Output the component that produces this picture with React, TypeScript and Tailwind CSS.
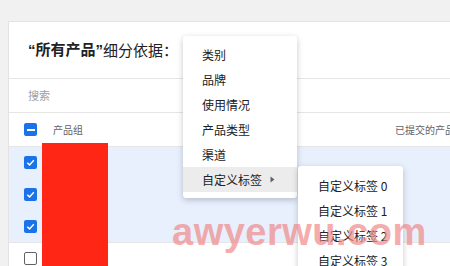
import React from "react";

const FONT = { fontFamily: '"Noto Sans CJK SC", "Noto Sans", sans-serif' };
const LATIN = { fontFamily: '"Liberation Sans", Arial, sans-serif' };

function Checkbox({ state }: { state: "checked" | "mixed" | "empty" }) {
  if (state === "empty") {
    return <div className="w-[13px] h-[13px] rounded-[2px] border-[1.5px] border-[#5f6368] bg-white" />;
  }
  return (
    <div className="w-[13px] h-[13px] rounded-[2px] bg-[#1a73e8] flex items-center justify-center">
      {state === "mixed" ? (
        <div className="w-[8px] h-[2px] bg-white" />
      ) : (
        <svg width="11" height="11" viewBox="0 0 12 12">
          <path d="M2.5 6.2 L5 8.6 L9.6 3.6" fill="none" stroke="white" strokeWidth="1.6" />
        </svg>
      )}
    </div>
  );
}

const menuItems = ["类别", "品牌", "使用情况", "产品类型", "渠道"];
const subItems = ["自定义标签 0", "自定义标签 1", "自定义标签 2", "自定义标签 3"];

export default function App() {
  return (
    <div className="relative w-[450px] h-[266px] overflow-hidden bg-[#f1f1f1]" style={FONT}>
      <div className="ml-[8px] mt-[21px] bg-white border-l border-t border-[#e3e3e3] h-[260px]">
        <div className="h-[57px] pl-[19px] flex items-center border-b border-[#e6e6e6] text-[15px] text-[#202124]">
          <span className="font-bold">
            <span style={LATIN}>“</span>所有产品<span style={LATIN}>”</span>
          </span>
          <span>细分依据：</span>
        </div>
        <div className="h-[34px] pl-[19px] flex items-center border-b border-[#e6e6e6] text-[11px] text-[#9aa0a6]">
          搜索
        </div>
        <div className="h-[34px] pl-[15px] flex items-center border-b border-[#e6e6e6] text-[10px] text-[#5f6368]">
          <Checkbox state="mixed" />
          <span className="ml-[16px]">产品组</span>
          <span className="ml-auto mr-[-5px] whitespace-nowrap">已提交的产品</span>
        </div>
        <div className="bg-[#e8f0fe]">
          {[0, 1, 2].map((i) => (
            <div key={i} className="h-[31.7px] pl-[15px] flex items-center">
              <Checkbox state="checked" />
            </div>
          ))}
        </div>
        <div className="h-[31px] pl-[15px] flex items-center border-t border-[#e6e6e6]">
          <Checkbox state="empty" />
        </div>
      </div>

      <div className="absolute left-[42px] top-[143px] w-[66px] h-[130px] bg-[#ff2616]" />

      <div className="absolute left-[183px] top-[36px] w-[114px] py-[6px] bg-white rounded-[3px] shadow-[0_2px_6px_rgba(0,0,0,0.22)] text-[12px] text-[#202124]">
        {menuItems.map((m) => (
          <div key={m} className="h-[25px] pl-[19px] flex items-center">
            {m}
          </div>
        ))}
        <div className="h-[25px] pl-[19px] flex items-center bg-[#ececec]">
          自定义标签
          <svg className="ml-[8px]" width="5" height="7" viewBox="0 0 5 7">
            <path d="M0.5 0.5 L4.5 3.5 L0.5 6.5 Z" fill="#5f6368" />
          </svg>
        </div>
      </div>

      <div className="absolute left-[298px] top-[166px] w-[105px] h-[110px] pt-[7px] bg-white rounded-[3px] shadow-[0_2px_6px_rgba(0,0,0,0.22)] text-[12px] text-[#202124]">
        {subItems.map((s) => (
          <div key={s} className="h-[25px] pl-[20px] flex items-center whitespace-nowrap">
            {s}
          </div>
        ))}
      </div>

      <div
        className="absolute left-[172px] top-[213px] text-[38px] font-bold leading-none text-[#f08a8a] opacity-70 pointer-events-none tracking-[0.5px]"
        style={LATIN}
      >
        awyerwu.com
      </div>
    </div>
  );
}
